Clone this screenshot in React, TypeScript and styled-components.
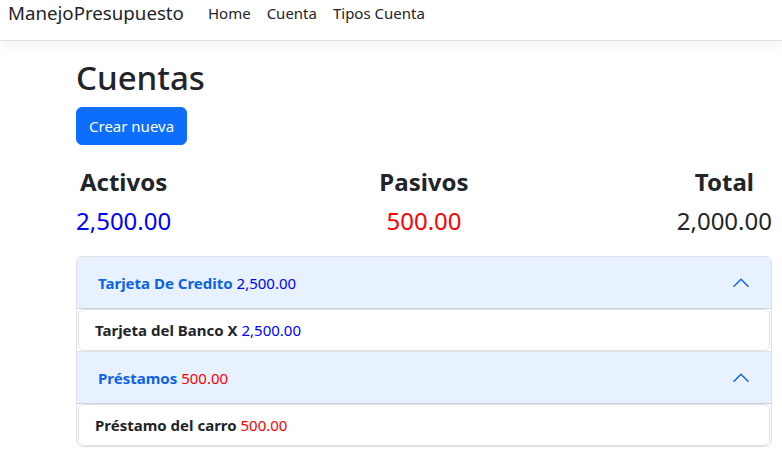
import React from 'react';
import styled, {createGlobalStyle} from 'styled-components';

const GlobalStyle = createGlobalStyle`
    * {
        box-sizing: border-box;
    }
    body {
        margin: 0;
        background: #fff;
        color: #212529;
        font-family: "Noto Sans", "Open Sans", sans-serif;
        font-size: 16px;
        line-height: 1.5;
        overflow: hidden;
    }
`;

const NavBar = styled.nav`
    display: flex;
    align-items: flex-start;
    height: 41px;
    padding: 0 8px;
    border-bottom: 1px solid #dee2e6;
    box-shadow: 0 4px 12px rgba(0, 0, 0, 0.05);
    background: #fff;
`;

const Brand = styled.a`
    font-size: 18.7px;
    line-height: 26px;
    color: #212529;
    margin-right: 16px;
    text-decoration: none;
`;

const NavLink = styled.a`
    font-size: 15px;
    line-height: 26px;
    padding: 0 8px;
    color: #212529;
    text-decoration: none;
`;

const Main = styled.main`
    margin-left: 76px;
    width: 696px;
    padding-top: 16px;
`;

const Title = styled.h1`
    margin: 0 0 8px;
    font-size: 33px;
    font-weight: 500;
    line-height: 42px;
`;

const Button = styled.button`
    display: inline-block;
    height: 38px;
    padding: 0 12px;
    border: 1px solid #0d6efd;
    border-radius: 6px;
    background: #0d6efd;
    color: #fff;
    font-family: inherit;
    font-size: 15px;
    line-height: 36px;
`;

const Summary = styled.div`
    display: flex;
    justify-content: space-between;
    margin: 22px 0 20px;
`;

const SummaryColumn = styled.div`
    text-align: center;
`;

const SummaryLabel = styled.h4`
    margin: 0 0 10px;
    font-size: 24px;
    font-weight: 700;
    line-height: 29px;
`;

const Amount = styled.span<{$tone?: 'activo' | 'pasivo'}>`
    color: ${({$tone}) =>
        $tone === 'activo' ? '#0000ff' : $tone === 'pasivo' ? '#ff0000' : 'inherit'};
    font-weight: 400;
`;

const SummaryValue = styled.div`
    font-size: 24px;
    line-height: 30px;
`;

const Accordion = styled.div`
    border: 1px solid #dee2e6;
    border-radius: 6px;
    overflow: hidden;
`;

const AccordionHeader = styled.button<{$first?: boolean}>`
    display: flex;
    align-items: center;
    width: 100%;
    padding: 14px 20px 14px 21px;
    border: 0;
    border-top: ${({$first}) => ($first ? '0' : '1px solid #dee2e6')};
    background: #e7f1ff;
    box-shadow: inset 0 -1px 0 rgba(0, 0, 0, 0.125);
    color: #0c63e4;
    font-family: inherit;
    font-size: 15px;
    font-weight: 700;
    line-height: 24px;
    text-align: left;

    svg {
        margin-left: auto;
    }
`;

const ItemList = styled.ul`
    margin: 0;
    padding: 0;
    list-style: none;
`;

const Item = styled.li`
    margin: 0 1px;
    padding: 8px 16px;
    border: 1px solid #dee2e6;
    border-radius: 6px;
    font-size: 15px;
    font-weight: 700;
    line-height: 24px;
`;

const Chevron = () => (
    <svg width="20" height="20" viewBox="0 0 16 16" fill="none">
        <path d="M2 11L8 5L14 11" stroke="#0c63e4" strokeWidth="1.1" />
    </svg>
);

type Cuenta = {nombre: string; balance: string};
type TipoCuenta = {nombre: string; balance: string; tone: 'activo' | 'pasivo'; cuentas: Cuenta[]};

const tipos: TipoCuenta[] = [
    {
        nombre: 'Tarjeta De Credito',
        balance: '2,500.00',
        tone: 'activo',
        cuentas: [{nombre: 'Tarjeta del Banco X', balance: '2,500.00'}],
    },
    {
        nombre: 'Préstamos',
        balance: '500.00',
        tone: 'pasivo',
        cuentas: [{nombre: 'Préstamo del carro', balance: '500.00'}],
    },
];

export default function App() {
    return (
        <>
            <GlobalStyle />
            <NavBar>
                <Brand href="#">ManejoPresupuesto</Brand>
                <NavLink href="#">Home</NavLink>
                <NavLink href="#">Cuenta</NavLink>
                <NavLink href="#">Tipos Cuenta</NavLink>
            </NavBar>
            <Main>
                <Title>Cuentas</Title>
                <Button>Crear nueva</Button>
                <Summary>
                    <SummaryColumn>
                        <SummaryLabel>Activos</SummaryLabel>
                        <SummaryValue>
                            <Amount $tone="activo">2,500.00</Amount>
                        </SummaryValue>
                    </SummaryColumn>
                    <SummaryColumn>
                        <SummaryLabel>Pasivos</SummaryLabel>
                        <SummaryValue>
                            <Amount $tone="pasivo">500.00</Amount>
                        </SummaryValue>
                    </SummaryColumn>
                    <SummaryColumn>
                        <SummaryLabel>Total</SummaryLabel>
                        <SummaryValue>
                            <Amount>2,000.00</Amount>
                        </SummaryValue>
                    </SummaryColumn>
                </Summary>
                <Accordion>
                    {tipos.map((tipo, i) => (
                        <React.Fragment key={tipo.nombre}>
                            <AccordionHeader $first={i === 0}>
                                <span>
                                    {tipo.nombre} <Amount $tone={tipo.tone}>{tipo.balance}</Amount>
                                </span>
                                <Chevron />
                            </AccordionHeader>
                            <ItemList>
                                {tipo.cuentas.map((cuenta) => (
                                    <Item key={cuenta.nombre}>
                                        {cuenta.nombre} <Amount $tone={tipo.tone}>{cuenta.balance}</Amount>
                                    </Item>
                                ))}
                            </ItemList>
                        </React.Fragment>
                    ))}
                </Accordion>
            </Main>
        </>
    );
}
